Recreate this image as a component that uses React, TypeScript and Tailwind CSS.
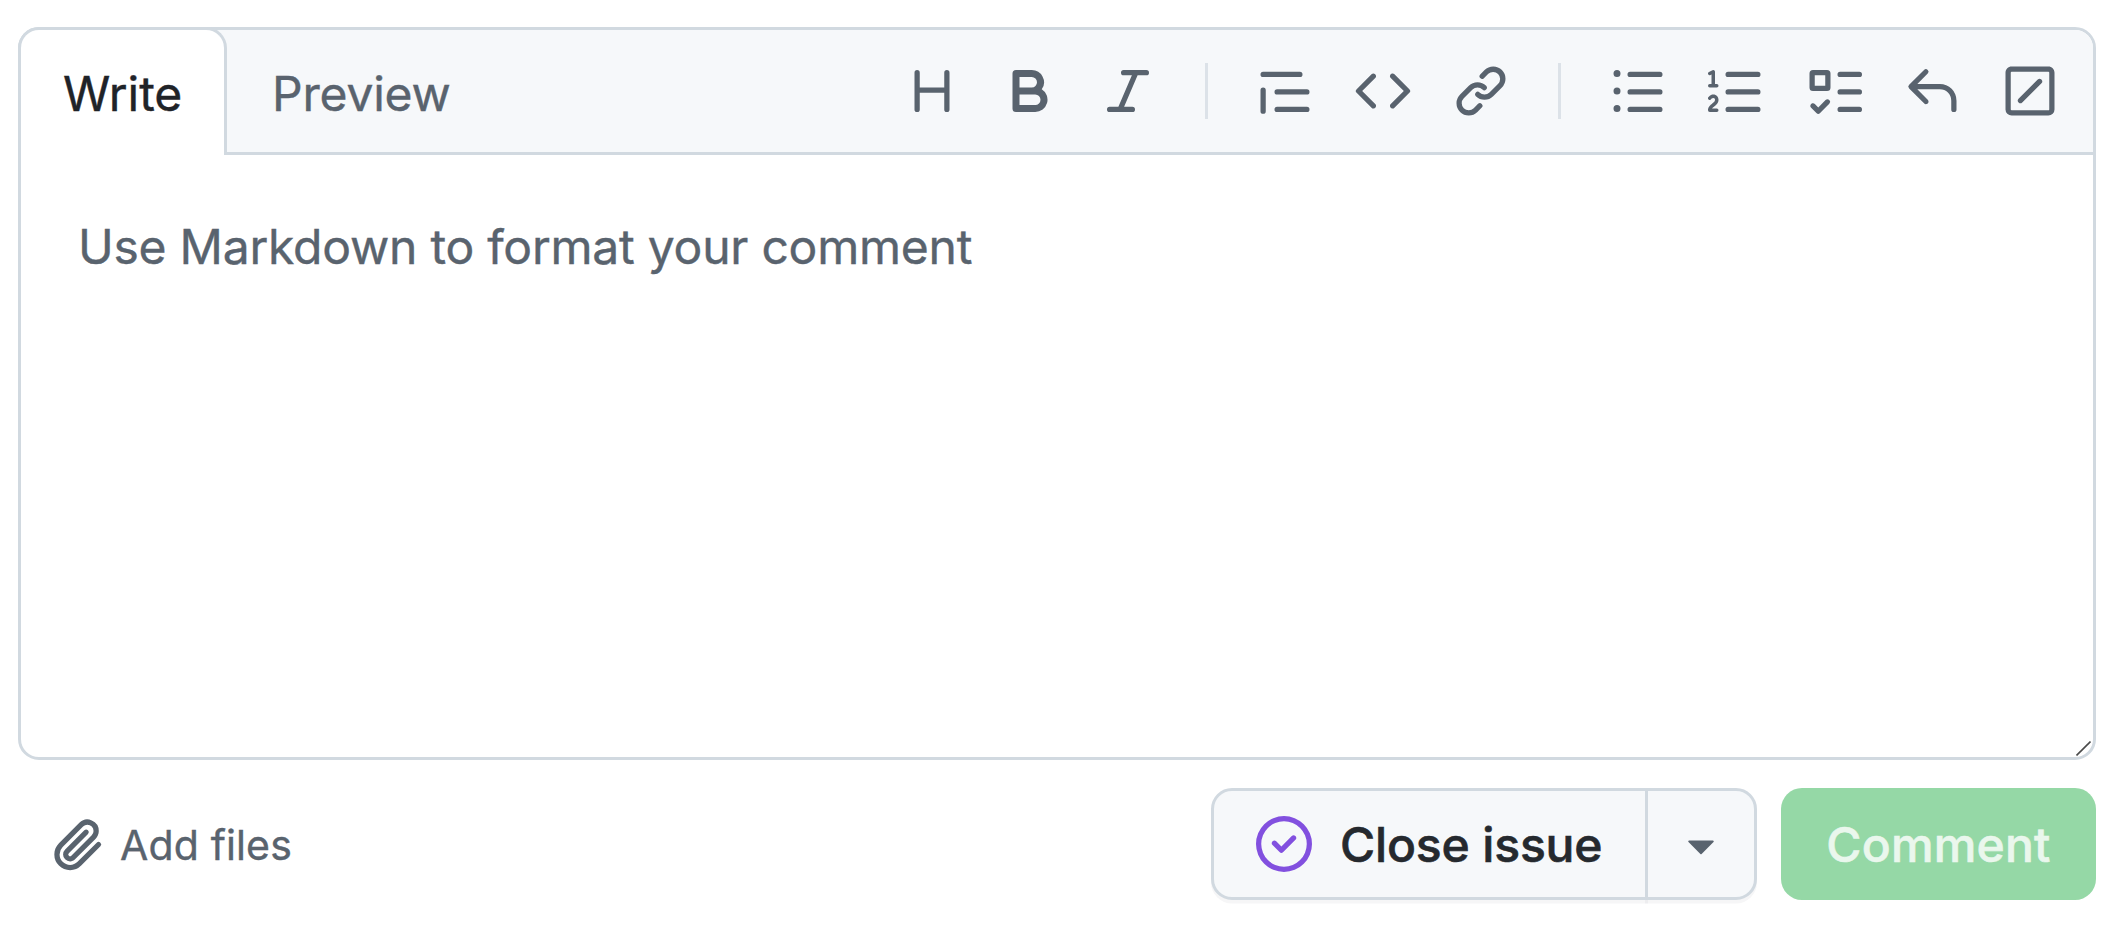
const ICONS = {
  heading:
    "M3.75 2a.75.75 0 0 1 .75.75V7h7V2.75a.75.75 0 0 1 1.5 0v10.5a.75.75 0 0 1-1.5 0V8.5h-7v4.75a.75.75 0 0 1-1.5 0V2.75A.75.75 0 0 1 3.75 2Z",
  bold: "M4 2h4.5a3.501 3.501 0 0 1 2.852 5.53A3.499 3.499 0 0 1 9.5 14H4a1 1 0 0 1-1-1V3a1 1 0 0 1 1-1Zm1 7v3h4.5a1.5 1.5 0 0 0 0-3Zm3.5-2a1.5 1.5 0 0 0 0-3H5v3Z",
  italic:
    "M6 2.75A.75.75 0 0 1 6.75 2h6.5a.75.75 0 0 1 0 1.5h-2.505l-3.858 9H9.25a.75.75 0 0 1 0 1.5h-6.5a.75.75 0 0 1 0-1.5h2.505l3.858-9H6.75A.75.75 0 0 1 6 2.75Z",
  quote:
    "M1.75 2.5h10.5a.75.75 0 0 1 0 1.5H1.75a.75.75 0 0 1 0-1.5Zm4 5h8.5a.75.75 0 0 1 0 1.5h-8.5a.75.75 0 0 1 0-1.5Zm0 5h8.5a.75.75 0 0 1 0 1.5h-8.5a.75.75 0 0 1 0-1.5ZM2.5 7.75v6a.75.75 0 0 1-1.5 0v-6a.75.75 0 0 1 1.5 0Z",
  code: "m11.28 3.22 4.25 4.25a.75.75 0 0 1 0 1.06l-4.25 4.25a.749.749 0 0 1-1.275-.326.749.749 0 0 1 .215-.734L13.94 8l-3.72-3.72a.749.749 0 0 1 .326-1.275.749.749 0 0 1 .734.215Zm-6.56 0a.751.751 0 0 1 1.042.018.751.751 0 0 1 .018 1.042L2.06 8l3.72 3.72a.749.749 0 0 1-.326 1.275.749.749 0 0 1-.734-.215L.47 8.53a.75.75 0 0 1 0-1.06Z",
  link: "m7.775 3.275 1.25-1.25a3.5 3.5 0 1 1 4.95 4.95l-2.5 2.5a3.5 3.5 0 0 1-4.95 0 .751.751 0 0 1 .018-1.042.751.751 0 0 1 1.042-.018 1.998 1.998 0 0 0 2.83 0l2.5-2.5a2.002 2.002 0 0 0-2.83-2.83l-1.25 1.25a.751.751 0 0 1-1.042-.018.751.751 0 0 1-.018-1.042Zm-4.69 9.64a1.998 1.998 0 0 0 2.83 0l1.25-1.25a.751.751 0 0 1 1.042.018.751.751 0 0 1 .018 1.042l-1.25 1.25a3.5 3.5 0 1 1-4.95-4.95l2.5-2.5a3.5 3.5 0 0 1 4.95 0 .751.751 0 0 1-.018 1.042.751.751 0 0 1-1.042.018 1.998 1.998 0 0 0-2.83 0l-2.5 2.5a1.998 1.998 0 0 0 0 2.83Z",
  unordered:
    "M5.75 2.5h8.5a.75.75 0 0 1 0 1.5h-8.5a.75.75 0 0 1 0-1.5Zm0 5h8.5a.75.75 0 0 1 0 1.5h-8.5a.75.75 0 0 1 0-1.5Zm0 5h8.5a.75.75 0 0 1 0 1.5h-8.5a.75.75 0 0 1 0-1.5ZM2 14a1 1 0 1 1 0-2 1 1 0 0 1 0 2Zm1-6a1 1 0 1 1-2 0 1 1 0 0 1 2 0ZM2 4a1 1 0 1 1 0-2 1 1 0 0 1 0 2Z",
  ordered:
    "M5 3.25a.75.75 0 0 1 .75-.75h8.5a.75.75 0 0 1 0 1.5h-8.5A.75.75 0 0 1 5 3.25Zm0 5a.75.75 0 0 1 .75-.75h8.5a.75.75 0 0 1 0 1.5h-8.5A.75.75 0 0 1 5 8.25Zm0 5a.75.75 0 0 1 .75-.75h8.5a.75.75 0 0 1 0 1.5h-8.5a.75.75 0 0 1-.75-.75ZM.924 10.32a.5.5 0 0 1-.851-.525l.001-.001.001-.002.002-.004.007-.011c.097-.144.215-.273.348-.384.228-.19.588-.392 1.068-.392.468 0 .858.181 1.126.484.259.294.377.673.377 1.038 0 .987-.686 1.495-1.156 1.845l-.047.035c-.303.225-.522.4-.654.597h1.357a.5.5 0 0 1 0 1H.5a.5.5 0 0 1-.5-.5c0-1.005.692-1.52 1.167-1.875l.035-.025c.531-.396.8-.625.8-1.078a.57.57 0 0 0-.128-.376C1.806 10.068 1.695 10 1.5 10a.658.658 0 0 0-.429.163.835.835 0 0 0-.144.153ZM2.003 2.5V6h.503a.5.5 0 0 1 0 1H.5a.5.5 0 0 1 0-1h.503V3.308l-.28.14a.5.5 0 0 1-.446-.895l1.003-.5a.5.5 0 0 1 .723.447Z",
  tasklist:
    "M2 2h4a1 1 0 0 1 1 1v4a1 1 0 0 1-1 1H2a1 1 0 0 1-1-1V3a1 1 0 0 1 1-1Zm4.655 8.595a.75.75 0 0 1 0 1.06L4.03 14.28a.75.75 0 0 1-1.06 0l-1.5-1.5a.749.749 0 0 1 .326-1.275.749.749 0 0 1 .734.215l.97.97 2.095-2.095a.75.75 0 0 1 1.06 0ZM9.75 2.5h5.5a.75.75 0 0 1 0 1.5h-5.5a.75.75 0 0 1 0-1.5Zm0 5h5.5a.75.75 0 0 1 0 1.5h-5.5a.75.75 0 0 1 0-1.5Zm0 5h5.5a.75.75 0 0 1 0 1.5h-5.5a.75.75 0 0 1 0-1.5Zm-7.25-9v3h3v-3Z",
  reply:
    "M6.78 1.97a.75.75 0 0 1 0 1.06L3.81 6h6.44A4.75 4.75 0 0 1 15 10.75v2.5a.75.75 0 0 1-1.5 0v-2.5a3.25 3.25 0 0 0-3.25-3.25H3.81l2.97 2.97a.749.749 0 0 1-.326 1.275.749.749 0 0 1-.734-.215L1.47 7.28a.75.75 0 0 1 0-1.06l4.25-4.25a.75.75 0 0 1 1.06 0Z",
  slash:
    "M13.25 1c.966 0 1.75.784 1.75 1.75v10.5A1.75 1.75 0 0 1 13.25 15H2.75A1.75 1.75 0 0 1 1 13.25V2.75C1 1.784 1.784 1 2.75 1ZM2.75 2.5a.25.25 0 0 0-.25.25v10.5c0 .138.112.25.25.25h10.5a.25.25 0 0 0 .25-.25V2.75a.25.25 0 0 0-.25-.25Zm8.53 3.28-5.5 5.5a.75.75 0 0 1-1.06-1.06l5.5-5.5a.75.75 0 0 1 1.06 1.06Z",
  paperclip:
    "M12.212 3.02a1.753 1.753 0 0 0-2.478.003l-5.83 5.83a3.007 3.007 0 0 0-.88 2.127c0 .795.315 1.551.88 2.116.567.567 1.333.89 2.126.89.79 0 1.548-.321 2.116-.89l5.48-5.48a.75.75 0 0 1 1.061 1.06l-5.48 5.48a4.492 4.492 0 0 1-3.177 1.33c-1.2 0-2.345-.487-3.187-1.33a4.483 4.483 0 0 1-1.32-3.177c0-1.195.475-2.341 1.32-3.186l5.83-5.83a3.25 3.25 0 0 1 5.553 2.297c0 .863-.343 1.691-.953 2.301L7.439 12.39c-.375.377-.884.59-1.416.593a1.998 1.998 0 0 1-1.412-.593 1.992 1.992 0 0 1 0-2.828l5.48-5.48a.751.751 0 0 1 1.042.018.751.751 0 0 1 .018 1.042l-5.48 5.48a.492.492 0 0 0 0 .707.499.499 0 0 0 .352.154.51.51 0 0 0 .356-.154l5.833-5.827a1.755 1.755 0 0 0 0-2.481Z",
  closed:
    "M11.28 6.78a.75.75 0 0 0-1.06-1.06L7.25 8.69 5.78 7.22a.75.75 0 0 0-1.06 1.06l2 2a.75.75 0 0 0 1.06 0l3.5-3.5ZM16 8A8 8 0 1 1 0 8a8 8 0 0 1 16 0Zm-1.5 0a6.5 6.5 0 1 0-13 0 6.5 6.5 0 0 0 13 0Z",
  caret:
    "m4.427 7.427 3.396 3.396a.25.25 0 0 0 .354 0l3.396-3.396A.25.25 0 0 0 11.396 7H4.604a.25.25 0 0 0-.177.427Z",
};

type IconName = keyof typeof ICONS;

function Icon({ name, className = "" }: { name: IconName; className?: string }) {
  return (
    <svg viewBox="0 0 16 16" fill="currentColor" aria-hidden="true" className={"size-14 shrink-0 " + className}>
      <path d={ICONS[name]} />
    </svg>
  );
}

const TOOL_GROUPS: IconName[][] = [
  ["heading", "bold", "italic"],
  ["quote", "code", "link"],
  ["unordered", "ordered", "tasklist", "reply", "slash"],
];

function Toolbar() {
  return (
    <div className="flex items-center text-[#59636e]">
      {TOOL_GROUPS.map((group, i) => (
        <div key={group[0]} className="flex items-center">
          {i > 0 && <span className="mx-[49px] h-14 w-[3px] bg-[#dce2e8]" />}
          <div className="flex gap-[42px]">
            {group.map((name) => (
              <button key={name} type="button" aria-label={name}>
                <Icon name={name} />
              </button>
            ))}
          </div>
        </div>
      ))}
    </div>
  );
}

function Editor() {
  return (
    <section className="relative flex h-[733px] flex-col rounded-[21px] border-[3px] border-[#d1d9e0] bg-white">
      <header className="flex h-[125px] rounded-t-[18px] bg-[#f6f8fa]">
        <button
          type="button"
          className="-mt-[3px] -ml-[3px] flex w-[209px] items-center rounded-t-[21px] border-[3px] border-b-0 border-[#d1d9e0] bg-white pt-[2px] pl-[42px] text-5xl text-[#1f2328] [-webkit-text-stroke:0.4px]"
        >
          Write
        </button>
        <div className="flex flex-1 items-center justify-between border-b-[3px] border-[#d1d9e0] pr-[35px] pl-[45px]">
          <button
            type="button"
            className="pt-[5px] text-5xl tracking-[-0.2px] text-[#59636e] [-webkit-text-stroke:0.4px]"
          >
            Preview
          </button>
          <Toolbar />
        </div>
      </header>
      <p className="flex-1 pt-14 pl-[57px] text-[48px] leading-[72px] tracking-[-0.23px] text-[#59636e] [-webkit-text-stroke:0.4px]">
        Use Markdown to format your comment
      </p>
      <svg viewBox="0 0 15 15" className="absolute right-[2px] bottom-[1px] size-[15px]" aria-hidden="true">
        <path d="M0.5 14.5 14.5 0.5" stroke="#4a4a4a" strokeWidth="1.6" />
      </svg>
    </section>
  );
}

function Footer() {
  return (
    <footer className="mt-7 flex h-28 items-center justify-between pl-[31px]">
      <button type="button" className="flex items-center gap-[15px] text-[#59636e]">
        <Icon name="paperclip" />
        <span className="pt-[2px] text-[41px] leading-none tracking-[0.15px] [-webkit-text-stroke:0.4px]">
          Add files
        </span>
      </button>
      <div className="flex gap-6">
        <div className="flex">
          <button
            type="button"
            className="flex h-28 w-[437px] items-center gap-7 rounded-l-[21px] border-[3px] border-[#d1d9e0] bg-[#f6f8fa] pl-[42px] text-5xl font-medium tracking-[-0.15px] text-[#25292e] shadow-[0_3.5px_0_rgba(31,35,40,0.04)]"
          >
            <Icon name="closed" className="text-[#8250df]" />
            <span className="pt-[2px] [-webkit-text-stroke:0.6px]">Close issue</span>
          </button>
          <button
            type="button"
            aria-label="More options"
            className="-ml-[3px] flex h-28 w-28 items-center justify-center rounded-r-[21px] border-[3px] border-[#d1d9e0] bg-[#f6f8fa] text-[#59636e] shadow-[0_3.5px_0_rgba(31,35,40,0.04)]"
          >
            <Icon name="caret" />
          </button>
        </div>
        <button
          type="button"
          className="h-28 w-[315px] rounded-[21px] bg-[#95d8a6] pt-[2px] text-5xl font-medium tracking-[0.2px] text-[#eaf7ed] [-webkit-text-stroke:0.6px]"
        >
          Comment
        </button>
      </div>
    </footer>
  );
}

export default function App() {
  return (
    <main className="h-[926px] bg-white pt-[27px] pr-[22px] pl-[18px] font-['Inter',sans-serif]">
      <Editor />
      <Footer />
    </main>
  );
}
